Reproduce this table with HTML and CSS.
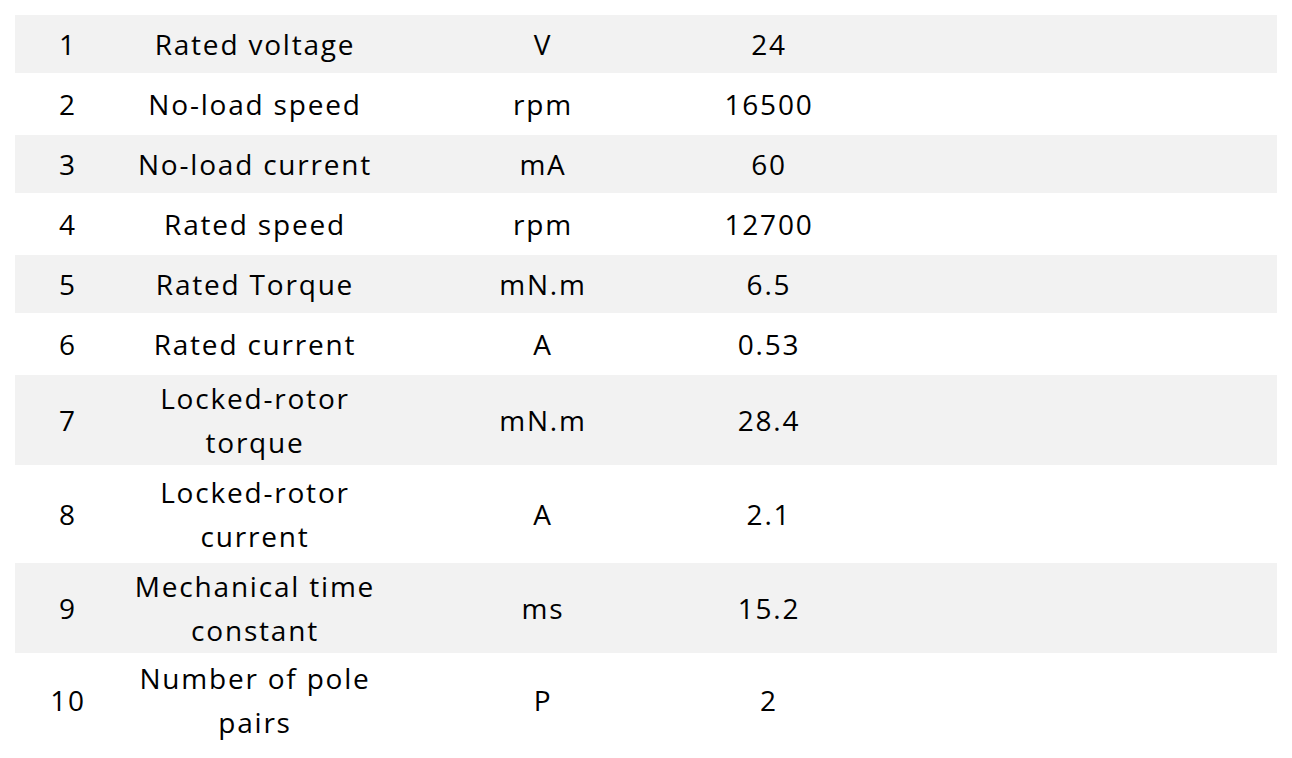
FILE: index.html
```html
<!DOCTYPE html>
<html>
<head>
<meta charset="utf-8">
<link rel="stylesheet" href="styles.css">
</head>
<body>
<table class="spec">
  <colgroup>
    <col class="c-no">
    <col class="c-name">
    <col class="c-unit">
    <col class="c-val">
    <col class="c-rest">
  </colgroup>
  <tbody>
    <tr class="odd"><td>1</td><td>Rated voltage</td><td>V</td><td>24</td><td></td></tr>
    <tr><td>2</td><td>No-load speed</td><td>rpm</td><td>16500</td><td></td></tr>
    <tr class="odd"><td>3</td><td>No-load current</td><td>mA</td><td>60</td><td></td></tr>
    <tr><td>4</td><td>Rated speed</td><td>rpm</td><td>12700</td><td></td></tr>
    <tr class="odd"><td>5</td><td>Rated Torque</td><td>mN.m</td><td>6.5</td><td></td></tr>
    <tr><td>6</td><td>Rated current</td><td>A</td><td>0.53</td><td></td></tr>
    <tr class="odd two"><td>7</td><td>Locked-rotor torque</td><td>mN.m</td><td>28.4</td><td></td></tr>
    <tr class="two tall"><td>8</td><td>Locked-rotor current</td><td>A</td><td>2.1</td><td></td></tr>
    <tr class="odd two"><td>9</td><td>Mechanical time constant</td><td>ms</td><td>15.2</td><td></td></tr>
    <tr class="two"><td>10</td><td>Number of pole pairs</td><td>P</td><td>2</td><td></td></tr>
  </tbody>
</table>
</body>
</html>
```
FILE: styles.css
```css
html, body {
  margin: 0;
  padding: 0;
  background: #ffffff;
}
body {
  padding: 13px 15px 0 15px;
  font-family: "Open Sans", "Noto Sans", sans-serif;
  color: #000000;
}
.spec {
  width: 1262px;
  table-layout: fixed;
  border-collapse: separate;
  border-spacing: 0 2px;
  font-size: 28px;
  letter-spacing: 1.8px;
}
.c-no { width: 104px; }
.c-name { width: 270px; }
.c-unit { width: 306px; }
.c-val { width: 146px; }
.c-rest { width: 436px; }
.spec td {
  padding: 0 0 0 2px;
  height: 58px;
  line-height: 44px;
  text-align: center;
  vertical-align: middle;
}
.spec tr.two td {
  height: 90px;
}
.spec tr.tall td {
  height: 94px;
}
.spec tr.odd td {
  background: #f2f2f2;
}
```
